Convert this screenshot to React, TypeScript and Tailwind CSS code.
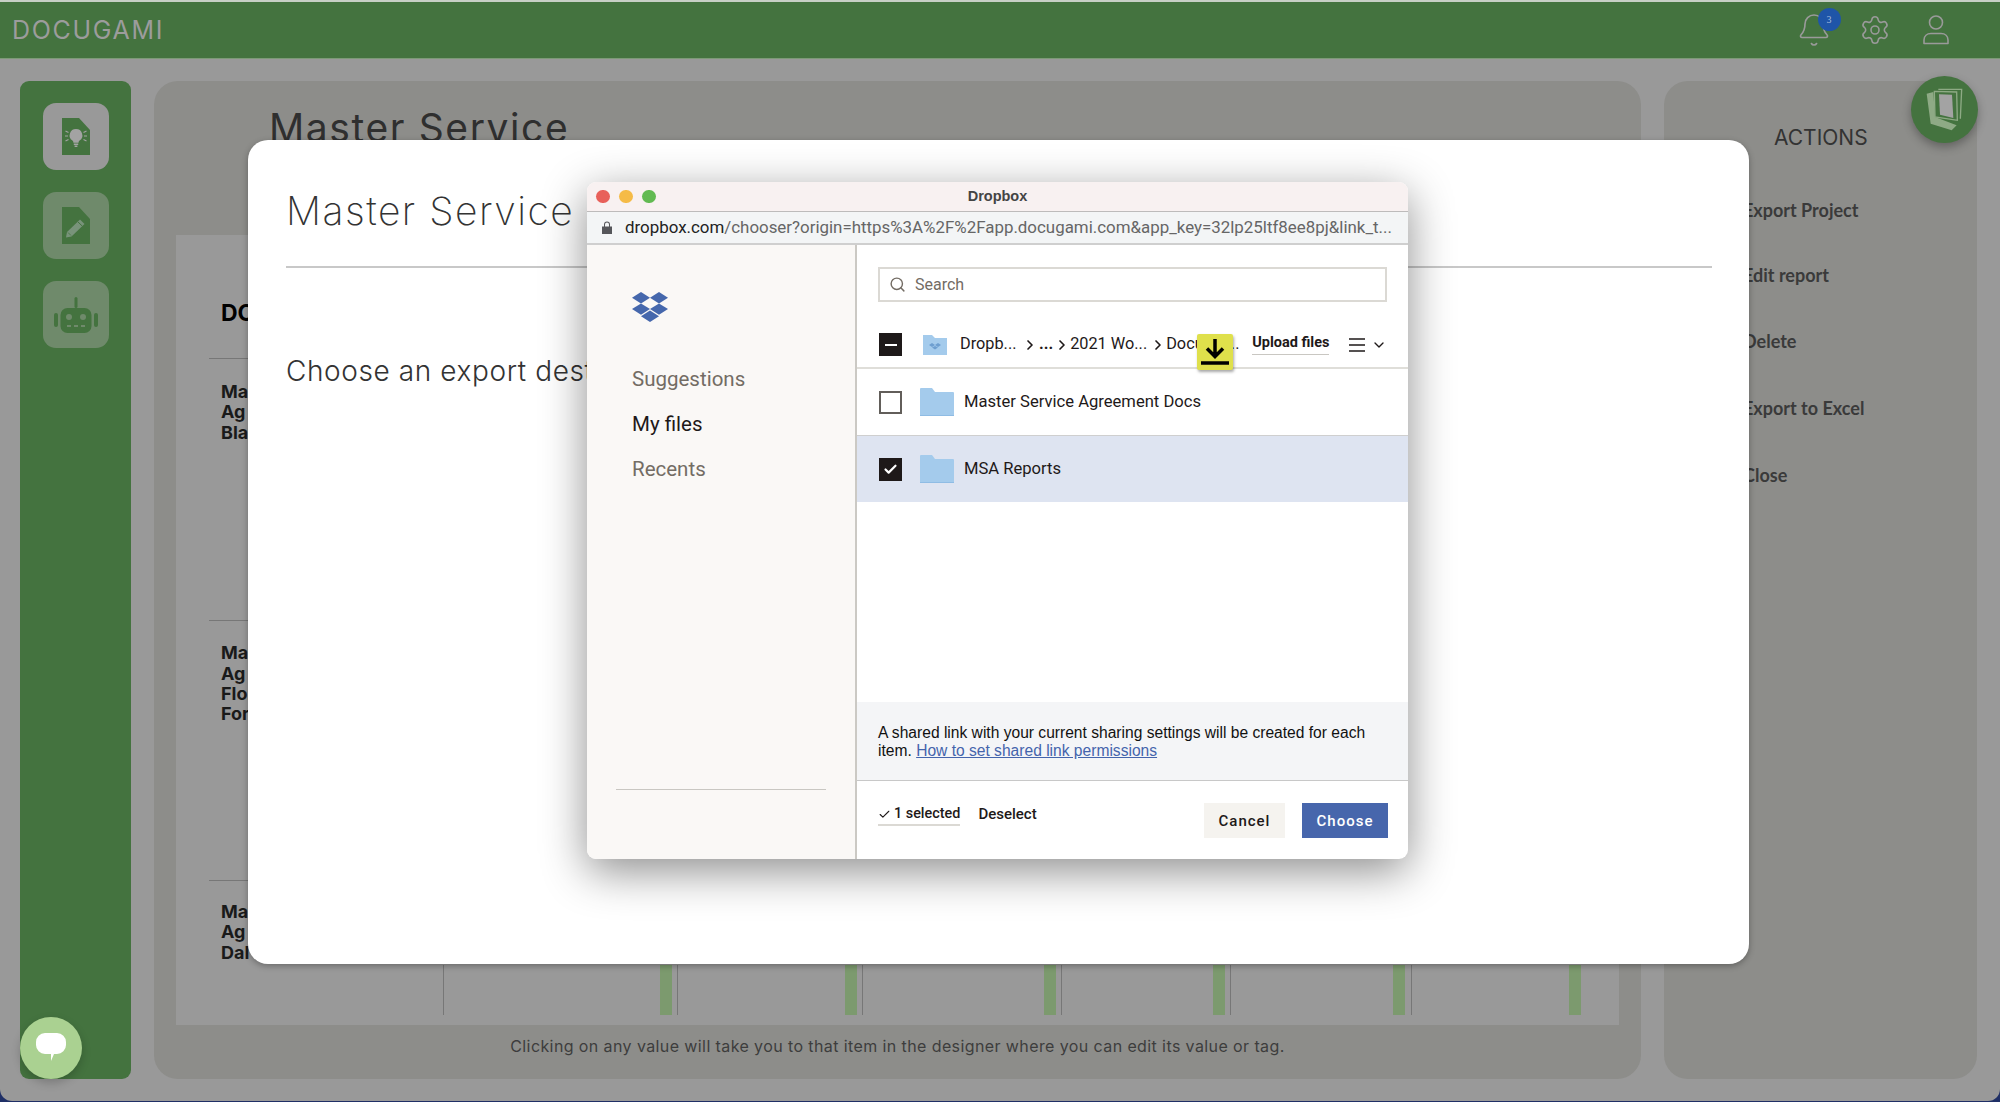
import { Bell, Settings, Search, ChevronDown, ChevronRight, Check } from "lucide-react";

const sans = "font-['Inter',sans-serif]";
const grotesk = "font-['Roboto',sans-serif]";
const helv = "font-['Liberation_Sans',sans-serif]";

const bars = [660, 845, 1044, 1213, 1393, 1569];
const ticks = [443, 677, 862, 1061, 1230, 1411];

const actions = [
  { label: "Export Project", mt: "mt-[46px]" },
  { label: "Edit report", mt: "mt-[41px]" },
  { label: "Delete", mt: "mt-[42px]" },
  { label: "Export to Excel", mt: "mt-[43px]" },
  { label: "Close", mt: "mt-[43px]" },
];

const DocShape = ({ fill }: { fill: string }) => (
  <path d="M1 0h17l11 12v25H1z" fill={fill} />
);

function InsightIcon() {
  return (
    <svg width="30" height="38" viewBox="0 0 30 38">
      <DocShape fill="#44733f" />
      <path d="M15 11a6.300 6.300 0 0 0-3.600 11.500c.8.600 1 1.200 1 2.200h5.200c0-1 .2-1.600 1-2.200a6.300 6.300 0 0 0-3.600-11.500z" fill="#a3a3a3" />
      <path d="M12.800 26.300h4.400M13.600 28.300h2.800" stroke="#a3a3a3" strokeWidth="1.400" />
      <path d="M4.500 13l3 1.500M4 18h3M4.500 23l3-1.500M25.500 13l-3 1.500M26 18h-3M25.500 23l-3-1.500" stroke="#a3a3a3" strokeWidth="1.200" />
    </svg>
  );
}

function EditIcon() {
  return (
    <svg width="30" height="38" viewBox="0 0 30 38">
      <DocShape fill="#44733f" />
      <path d="M19 12.500l4.500 4.500-13 12.500-5.500 1 1-5.500z" fill="#78937a" />
      <path d="M17 15l4.500 4.300" stroke="#44733f" strokeWidth="1" />
      <path d="M7 25.500l3 3" stroke="#44733f" strokeWidth="0.800" />
    </svg>
  );
}

function RobotIcon() {
  return (
    <svg width="44" height="36" viewBox="0 0 44 36">
      <rect x="6.500" y="11" width="31" height="25" rx="7" fill="#44733f" />
      <rect x="20.500" y="0" width="3" height="11" rx="1.500" fill="#44733f" />
      <rect x="0" y="16" width="4" height="14" rx="2" fill="#44733f" />
      <rect x="40" y="16" width="4" height="14" rx="2" fill="#44733f" />
      <circle cx="15" cy="20" r="3" fill="#6f8a6b" />
      <circle cx="29" cy="20" r="3" fill="#6f8a6b" />
      <path d="M13 29h4M20 29h4M27 29h4" stroke="#6f8a6b" strokeWidth="2" />
    </svg>
  );
}

function UserIcon() {
  return (
    <svg width="26" height="30" viewBox="0 0 26 30" fill="none" stroke="#9a9a9a" strokeWidth="1.600">
      <circle cx="13" cy="7.500" r="6.500" />
      <path d="M1 28.500v-3.500c0-4 3-6.500 7-6.500h10c4 0 7 2.500 7 6.500v3.500z" strokeLinejoin="round" />
    </svg>
  );
}

function PagesIcon() {
  return (
    <svg width="40" height="45" viewBox="55 35 120 135" fill="none">
      <path d="M95 42h70l-4 88" stroke="#8eaa85" strokeWidth="4" />
      <path d="M60 55l20-5 5 75 65 25-15 15-63-20z" fill="#8eaa85" />
      <path d="M83 48l67 2 2 85-67-10z" stroke="#8eaa85" strokeWidth="4" />
      <path d="M97 57l39 1 4 70-40-10z" fill="#a3a3a3" />
    </svg>
  );
}

function DropboxLogo() {
  return (
    <svg width="36" height="30" viewBox="0 0 36 30" fill="#4567ac">
      <path d="M9 0l9 5.700-9 5.700-9-5.700z" />
      <path d="M27 0l9 5.700-9 5.700-9-5.700z" />
      <path d="M9 11.400l9 5.700-9 5.700-9-5.700z" />
      <path d="M27 11.400l9 5.700-9 5.700-9-5.700z" />
      <path d="M18 18.600l9 5.700-9 5.700-9-5.700z" />
    </svg>
  );
}

function FolderIcon({ small }: { small?: boolean }) {
  if (small) {
    return (
      <svg width="24" height="20" viewBox="0 0 24 20" className="shrink-0">
        <path d="M0 0h9l3 3h12v17H0z" fill="#a4cbec" />
        <path d="M9 8l3 2-3 2-3-2zM15 8l3 2-3 2-3-2zM9 12.500l3 2 3-2 -3-1.500-3 1.500z" fill="#6e9fd0" />
      </svg>
    );
  }
  return (
    <svg width="34" height="28" viewBox="0 0 34 28" className="shrink-0">
      <path d="M0 1a1 1 0 0 1 1-1h11l3 4h18a1 1 0 0 1 1 1v22a1 1 0 0 1-1 1H1a1 1 0 0 1-1-1z" fill="#a4cbec" />
      <path d="M0 27h34v1H0z" fill="#8fbce4" />
    </svg>
  );
}

function Row({ name, selected }: { name: string; selected?: boolean }) {
  return (
    <div
      className={
        selected
          ? "flex h-[67px] items-center border-t border-[#cfcfcf] bg-[#dee4f1] pl-[22px]"
          : "flex h-[66px] items-center pl-[22px]"
      }
    >
      {selected ? (
        <span className="flex h-[23px] w-[23px] items-center justify-center bg-[#1e1919]">
          <Check size={15} strokeWidth={3.500} color="#fff" />
        </span>
      ) : (
        <span className="h-[23px] w-[23px] border-2 border-[#625e5a] bg-white" />
      )}
      <span className="ml-[18px]">
        <FolderIcon />
      </span>
      <span className={`ml-[10px] pt-[1px] text-[16.600px] text-[#1e1919] ${grotesk}`}>{name}</span>
    </div>
  );
}

function DropboxWindow() {
  return (
    <div className="absolute left-[339px] top-[42px] flex h-[677px] w-[821px] flex-col overflow-hidden rounded-[9px] bg-white shadow-[0_12px_45px_rgba(0,0,0,0.45)]">
      <div className="relative flex h-[30px] shrink-0 items-center justify-center border-b border-[#bdbbbb] bg-[#f8f1f1]">
        <div className="absolute left-[9px] flex gap-[9.500px]">
          <span className="h-[13.500px] w-[13.500px] rounded-full bg-[#e8605a]" />
          <span className="h-[13.500px] w-[13.500px] rounded-full bg-[#f5bb47]" />
          <span className="h-[13.500px] w-[13.500px] rounded-full bg-[#62ba52]" />
        </div>
        <span className={`text-[14.500px] font-bold text-[#444] ${helv}`}>Dropbox</span>
      </div>
      <div className="flex h-[33px] shrink-0 items-center border-b-2 border-[#cfcfcf] bg-[#f3f5f6] pl-[15px]">
        <svg width="10" height="13" viewBox="0 0 10 13" fill="#55565a">
          <path d="M0 5.500h10V13H0zM2 5.500V3.500a3 3 0 0 1 6 0v2H7V3.500a2 2 0 0 0-4 0v2z" />
        </svg>
        <span className={`ml-[13px] whitespace-nowrap pt-[1px] text-[16.900px] text-[#666] ${grotesk}`}>
          <span className="text-[#222]">dropbox.com</span>
          /chooser?origin=https%3A%2F%2Fapp.docugami.com&amp;app_key=32lp25ltf8ee8pj&amp;link_t...
        </span>
      </div>
      <div className="flex min-h-0 flex-1">
        <aside className="flex w-[270px] shrink-0 flex-col border-r-2 border-[#cbc9c4] bg-[#faf8f6] pl-[45px]">
          <div className="mt-[47px]">
            <DropboxLogo />
          </div>
          <nav className={`mt-[45px] flex flex-col gap-[20px] text-[20.500px] leading-[25px] text-[#736c64] ${grotesk}`}>
            <span>Suggestions</span>
            <span className="text-[#1e1919]">My files</span>
            <span>Recents</span>
          </nav>
          <div className="ml-[-16px] mt-[307px] h-px w-[210px] bg-[#c9c7c2]" />
        </aside>
        <div className="flex min-w-0 flex-1 flex-col">
          <div className="mx-[21px] mt-[22px] flex h-[35px] items-center border-2 border-[#dbd9d4] pl-[9px]">
            <Search size={17} color="#736c64" strokeWidth={2} />
            <span className={`ml-[9px] text-[16px] text-[#736c64] ${grotesk}`}>Search</span>
          </div>
          <div className={`relative mt-[20px] flex h-[47px] items-center border-b-2 border-[#dfded9] pl-[22px] text-[16.300px] text-[#1e1919] ${grotesk}`}>
            <span className="flex h-[23px] w-[23px] items-center justify-center bg-[#1e1919]">
              <span className="h-[2px] w-[12px] bg-white" />
            </span>
            <span className="ml-[21px]">
              <FolderIcon small />
            </span>
            <span className="ml-[13px] w-[60px] whitespace-nowrap">Dropb...</span>
            <ChevronRight size={16} strokeWidth={2.500} className="ml-[2px]" />
            <span className="ml-[1px] font-bold">...</span>
            <ChevronRight size={16} strokeWidth={2.500} className="ml-[1px]" />
            <span className="whitespace-nowrap">2021 Wo...</span>
            <ChevronRight size={16} strokeWidth={2.500} className="ml-[3px]" />
            <span className="w-[72px] whitespace-nowrap">Docume...</span>
            <span className="ml-[14px] border-b border-[#c9c7c2] pb-[2px] text-[14.500px] font-bold leading-[18px]">Upload files</span>
            <svg width="16" height="14" viewBox="0 0 16 14" className="ml-[20px]" stroke="#1e1919" strokeWidth="1.600">
              <path d="M0 1h16M0 7h16M0 13h16" />
            </svg>
            <ChevronDown size={16} strokeWidth={2} className="ml-[6px]" />
            <div className="absolute left-[340px] top-[12px] flex h-[36px] w-[36px] flex-col items-center rounded-[2px] bg-[#dfe04b] shadow-[1px_2px_3px_rgba(0,0,0,0.35)]">
              <svg width="30" height="34" viewBox="0 0 30 34" stroke="#000" fill="none">
                <path d="M15 5v17M7 14.500l8 8 8-8" strokeWidth="3.500" />
                <path d="M1 29h28" strokeWidth="3.500" />
              </svg>
            </div>
          </div>
          <Row name="Master Service Agreement Docs" />
          <Row name="MSA Reports" selected />
          <div className="flex-1" />
          <div className={`h-[79px] border-b border-[#c8c8c8] bg-[#f4f5f7] pl-[21px] pt-[22px] text-[15.600px] leading-[18px] text-[#111] ${helv}`}>
            A shared link with your current sharing settings will be created for each
            <br />
            item. <span className="text-[#4464ac] underline">How to set shared link permissions</span>
          </div>
          <div className={`flex h-[78px] items-start pl-[21px] ${grotesk}`}>
            <span className="mt-[24px] flex items-center gap-[3px] border-b-2 border-[#dbd9d4] pb-[1px] text-[14.400px] font-medium leading-[18px] text-[#1e1919]">
              <Check size={13} strokeWidth={2} />1 selected
            </span>
            <span className="ml-[18px] mt-[24px] text-[15px] font-medium leading-[18px] text-[#1e1919]">Deselect</span>
            <span className="ml-auto mt-[22px] flex h-[35px] w-[81px] items-center justify-center bg-[#f5f3ef] pt-[1px] text-[15px] font-medium tracking-[1px] text-[#1e1919]">Cancel</span>
            <span className="ml-[17px] mr-[20px] mt-[22px] flex h-[35px] w-[86px] items-center justify-center bg-[#4766ac] pt-[1px] text-[15px] font-medium tracking-[1px] text-white">Choose</span>
          </div>
        </div>
      </div>
    </div>
  );
}

function Modal() {
  return (
    <div className="absolute left-[248px] top-[140px] h-[824px] w-[1501px] rounded-[20px] bg-white pl-[38px] pr-[37px] shadow-[0_2px_6px_rgba(0,0,0,0.3)]">
      <h2 className={`mt-[44px] w-[301px] overflow-hidden whitespace-nowrap text-[39px] font-extralight leading-[54px] tracking-[1.500px] text-[#333] ${sans}`}>Master Service Agreement</h2>
      <div className="mt-[28px] h-[2px] bg-[#c8c8c8]" />
      <p className={`mt-[85px] w-[301px] overflow-hidden whitespace-nowrap text-[28px] font-light leading-[36px] tracking-[0.600px] text-[#333] ${sans}`}>Choose an export destination</p>
      <DropboxWindow />
    </div>
  );
}

function Label({ lines, mt }: { lines: string[]; mt: string }) {
  return (
    <div className={`${mt} text-[18px] font-bold leading-[20.400px] text-[#1a1a1a] ${sans}`}>
      {lines.map((l) => (
        <div key={l}>{l}</div>
      ))}
    </div>
  );
}

export default function App() {
  return (
    <div className="relative h-[1102px] w-[2000px] overflow-hidden bg-[#1f2f66]">
      <div className="flex h-[1101px] flex-col rounded-b-[12px] bg-[#999]">
        <header className="flex h-[59px] shrink-0 items-center border-t-2 border-[#c7cfc5] border-b border-b-[#7d9a77] bg-[#44733f] pl-[12px]">
          <span className={`text-[25px] leading-none tracking-[1.700px] text-[#9c9c9c] ${sans}`}>DOCUGAMI</span>
          <div className="relative ml-auto">
            <Bell size={36} strokeWidth={1.100} color="#9a9a9a" />
            <span className="absolute left-[22px] top-[-4px] flex h-[23px] w-[23px] items-center justify-center rounded-full bg-[#1f55a8] font-['Liberation_Serif',serif] text-[10px] text-[#a9bedd]">3</span>
          </div>
          <Settings size={32} strokeWidth={1.200} color="#9a9a9a" className="ml-[27.500px]" />
          <span className="ml-[32px] mr-[51px] flex">
            <UserIcon />
          </span>
        </header>
        <div className="flex min-h-0 flex-1 gap-[23px] pb-[22px] pl-[20px] pr-[23px] pt-[22px]">
          <aside className="flex w-[111px] shrink-0 flex-col items-center gap-[22px] rounded-[9px] bg-[#44733f] pt-[22px]">
            <div className="flex h-[67px] w-[66px] items-center justify-center rounded-[13px] bg-[#999]">
              <InsightIcon />
            </div>
            <div className="flex h-[67px] w-[66px] items-center justify-center rounded-[13px] bg-[#6f8a6b]">
              <EditIcon />
            </div>
            <div className="flex h-[67px] w-[66px] items-center justify-center rounded-[13px] bg-[#6f8a6b]">
              <RobotIcon />
            </div>
          </aside>
          <main className="flex w-[1487px] shrink-0 flex-col rounded-[24px] bg-[#8d8d8a] px-[22px]">
            <h1 className={`ml-[93px] mt-[22px] h-[132px] whitespace-nowrap text-[39px] font-normal leading-[50px] tracking-[1.600px] text-[#2f2f2f] ${sans}`}>Master Service</h1>
            <div className="relative h-[790px] shrink-0 bg-[#999] pl-[45px]">
              <div className={`pt-[62px] text-[23px] font-bold leading-[32px] text-black ${sans}`}>DOCUMENTS</div>
              <div className="absolute left-[33px] right-0 top-[123px] h-px bg-[#777]" />
              <div className="absolute left-[33px] right-0 top-[385px] h-px bg-[#777]" />
              <div className="absolute left-[33px] right-0 top-[645px] h-px bg-[#777]" />
              <Label lines={["Ma", "Ag", "Bla"]} mt="mt-[53px]" />
              <Label lines={["Ma", "Ag", "Flo", "For"]} mt="mt-[200px]" />
              <Label lines={["Ma", "Ag", "Dal"]} mt="mt-[177px]" />
              <svg width="1444" height="50" className="absolute left-0 top-[730px]" viewBox="0 0 1444 50">
                {bars.map((x) => (
                  <rect key={x} x={x - 176} y="0" width="12" height="50" fill="#7c9a6e" />
                ))}
                {ticks.map((x) => (
                  <rect key={x} x={x - 176} y="0" width="1" height="50" fill="#777" />
                ))}
              </svg>
            </div>
            <p className={`mt-[10px] text-center text-[16px] leading-[22px] tracking-[0.400px] text-[#3d3d3d] ${sans}`}>
              Clicking on any value will take you to that item in the designer where you can edit its value or tag.
            </p>
          </main>
          <section className="flex w-[313px] shrink-0 flex-col rounded-[24px] bg-[#8d8d8a]">
            <h3 className={`ml-[110px] mt-[43px] text-[21px] leading-[28px] text-[#333] ${sans}`}>ACTIONS</h3>
            <div className="ml-[79px] flex flex-col font-['Lato',sans-serif] text-[18px] font-bold leading-[24px] text-[#3a3a3a]">
              {actions.map((a) => (
                <span key={a.label} className={a.mt}>
                  {a.label}
                </span>
              ))}
            </div>
          </section>
        </div>
      </div>
      <div className="absolute left-[1911px] top-[76px] flex h-[67px] w-[67px] items-center justify-center rounded-full bg-[#44733f] shadow-[0_4px_10px_rgba(0,0,0,0.3)]">
        <PagesIcon />
      </div>
      <Modal />
      <div className="absolute left-[20px] top-[1017px] flex h-[62px] w-[62px] items-center justify-center rounded-full bg-[#aad191] shadow-[0_4px_10px_rgba(0,0,0,0.2)]">
        <svg width="32" height="32" viewBox="0 0 32 32" fill="#fff">
          <path d="M10 1h12a9 9 0 0 1 9 9v3a9 9 0 0 1-9 9h-3l-3 7v-7h-6a9 9 0 0 1-9-9v-3a9 9 0 0 1 9-9z" />
        </svg>
      </div>
    </div>
  );
}
